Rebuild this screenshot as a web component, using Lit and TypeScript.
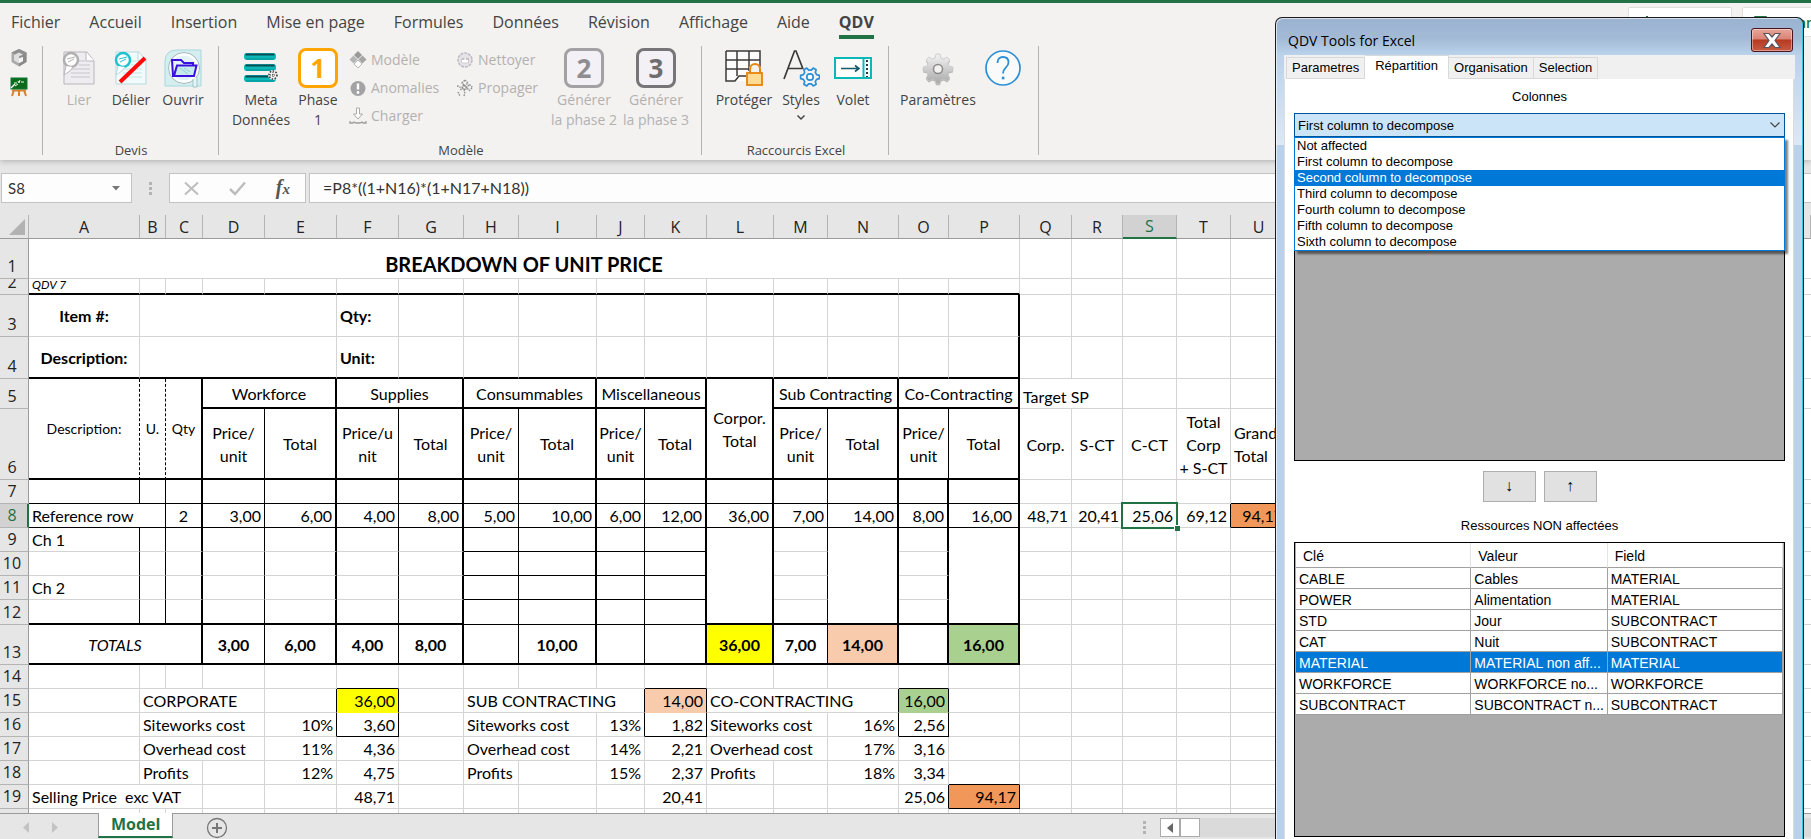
import { LitElement, html, css, svg, nothing } from "lit";
import { customElement, state } from "lit/decorators.js";
import { classMap } from "lit/directives/class-map.js";

/* ---------- icons ---------- */

const cube = html`<svg width="18" height="20" viewBox="0 0 18 20" aria-hidden="true">
  <path d="M9 1 16.5 4.6V14L9 18.4 1.5 14V4.6Z" fill="#a9a9a9" />
  <path d="M9 1 16.5 4.6 9 8.6 1.5 4.6Z" fill="#8f8f8f" />
  <path d="M9 8.6 16.5 4.6V14L9 18.4Z" fill="#8a8a8a" />
  <path d="M4 7 9 4.5 13 6.5 9 8.5V11L13 9v4l-4 2.2L4 12.5Z" fill="#dedede" />
  <path d="M9 10v5l4-2V9Z" fill="#fff" opacity=".7" />
</svg>`;

const board = html`<svg width="18" height="20" viewBox="0 0 18 20" aria-hidden="true">
  <path d="M4 13 2 19M14 13l2 6M9 13v6M2 13.5h14" stroke="#d9822b" stroke-width="2" />
  <rect x="1" y="1" width="16" height="11" fill="#0b6b1c" stroke="#173" />
  <path d="M4 6h3M8 4l1 2 1-3M11 5h3M5 9l3-2" stroke="#e9ffe9" fill="none" />
  <path d="m1 11 4-4" stroke="#fff" stroke-width="1.5" />
</svg>`;

const sheetDoc = (line: string, badge: string, paper: string) => svg`
  <path d="M2 3H25L32 12V35H2Z" fill="${paper}" stroke="${line}" />
  <path d="M24 3v9h8" fill="#fff" stroke="${line}" />
  <path d="M17 12h6M17 16h11M9 20h19M9 24h19M9 28h19" stroke="${line}" opacity=".7" />
  <circle cx="9" cy="11" r="7" fill="#fff" stroke="${badge}" stroke-width="2.5" />
  <path d="M5 10l8-2M6 13l6-3" stroke="${badge}" />
  <path d="M4 17 2 26l6-4 3-4" fill="#fff" stroke="${line}" />`;

const lier = html`<svg width="34" height="38" viewBox="0 0 34 38" aria-hidden="true">
  ${sheetDoc("#b9b5bb", "#b0b0b0", "#efecf1")}
</svg>`;
const delier = html`<svg width="34" height="38" viewBox="0 0 34 38" aria-hidden="true">
  ${sheetDoc("#b5d9dc", "#1fc3cf", "#f2fbfc")}
  <path d="M6 33 31 9" stroke="#ff0a0a" stroke-width="4" />
</svg>`;
const ouvrir = html`<svg width="40" height="40" viewBox="0 0 40 40" aria-hidden="true">
  <path d="M2 38V14Q2 2 14 2H38V38Z" fill="#d5eef0" stroke="#a5d8dd" />
  <circle cx="21" cy="20" r="15.5" fill="#e3f3f5" stroke="#a9b9bc" />
  <circle cx="21" cy="20" r="13.5" fill="none" stroke="#fff" stroke-width="2" />
  <path d="M30 31v8h4v-10" fill="#e6f5f6" stroke="#9fc5c9" />
  <path d="M9 12h9l3 3h9v4H14l-3 9H10Z" fill="none" stroke="#3a10e0" stroke-width="2" />
  <path d="M14 17.500H33.500L31 28H11Z" fill="#c7eaed" stroke="#3a10e0" stroke-width="2" />
  <path d="m17 20 8 6M21 20l6 4" stroke="#8fcfd5" />
</svg>`;
const meta = html`<svg width="36" height="34" viewBox="0 0 36 34" aria-hidden="true">
  ${[2, 13, 24].map(
    (y) => svg`<rect x="1" y="${y}" width="32" height="7" rx="3" fill="#0bb8b8" />
      <path d="M2.500 ${y + 1.5}h29" stroke="#0a4f55" stroke-width="2" />
      <path d="M3 ${y + 6}h28" stroke="#078f92" />`
  )}
  <circle cx="30" cy="24" r="5" fill="#f3f2f1" />
  <circle cx="30" cy="24" r="4" fill="none" stroke="#333" stroke-width="1.500" stroke-dasharray="1.500 1.500" />
  <path d="M27 24h6M30 21v6" stroke="#333" stroke-dasharray="1 1" />
</svg>`;

const diamonds = html`<svg width="18" height="18" viewBox="0 0 18 18" aria-hidden="true">
  <path d="M9 0 13 4 9 8 5 4Z" fill="#9a9a9a" />
  <path d="M4.500 4.500 8.500 8.500 4.500 12.500 .5 8.500Z" fill="#b5b5b5" />
  <path d="M13.500 4.500 17.500 8.500 13.500 12.500 9.500 8.500Z" fill="#a5a5a5" />
  <path d="M9 9 13 13 9 17 5 13Z" fill="#fff" stroke="#b8b8b8" />
</svg>`;
const alertIcon = html`<svg width="18" height="18" viewBox="0 0 18 18" aria-hidden="true">
  <circle cx="9" cy="9.500" r="7.500" fill="#a3a2a4" />
  <path d="M9 4.500v6" stroke="#fff" stroke-width="2.400" />
  <circle cx="9" cy="13.500" r="1.400" fill="#fff" />
</svg>`;
const download = html`<svg width="18" height="18" viewBox="0 0 18 18" aria-hidden="true">
  <path d="M7.500 1h3v6h3L9 12 4.500 7h3Z" fill="#fff" stroke="#aaa" />
  <path d="M1 14v2h3l1-1 2 1h4l2-1 1 1h3v-2" fill="none" stroke="#9d9d9d" stroke-width="1.300" />
</svg>`;
const clean = html`<svg width="18" height="18" viewBox="0 0 18 18" aria-hidden="true">
  <circle cx="9" cy="9" r="7" fill="#e6e2e8" stroke="#bdb9bf" stroke-width="1.500" stroke-dasharray="3 1" />
  <path d="M5.500 7.500V12h7V7.500" fill="#fff" stroke="#cfccd1" />
  <path d="M6 8h2.500M10 8h2.500" stroke="#8f8f8f" />
</svg>`;
const spread = html`<svg width="18" height="18" viewBox="0 0 18 18" aria-hidden="true">
  <g fill="none" stroke="#8f8f8f" stroke-width="1.400" stroke-dasharray="1.500 1">
    <path d="M9 1 12 4 9 7 6 4Z" /><path d="m13.500 5.500 3 3-3 3-3-3Z" /><path d="m8 6 3 3-2 2-3-3Z" />
    <path d="M1 7q4 0 4 5M6 9q4 2 2 8M2 13l2 4" />
  </g>
</svg>`;

const phase = (n: string, edge: string, ink: string, fill: string) => html`
  <span class="phase" style="border-color:${edge};color:${ink};background:${fill}">${n}</span>`;

const protect = html`<svg width="38" height="38" viewBox="0 0 38 38" aria-hidden="true">
  <path d="M1 2H35V32H14L10 32H1Z" fill="#fcfcfc" />
  <path d="M1 2H35V20M1 2V32H10L14 27H22M1 11H35M1 20H27M12 2V27M24 2V22" fill="none" stroke="#3b3a39" stroke-width="1.500" />
  <path d="M21 38V22h3v-4q6-6 12 0v4h2v16Z" fill="#f3f2f1" />
  <path d="M25 24v-4a5 5 0 0 1 10 0v4" fill="none" stroke="#e8830c" stroke-width="2" />
  <rect x="22" y="24" width="15" height="12" fill="#fbdc92" stroke="#e8830c" stroke-width="1.800" />
</svg>`;

const gearPath = (cx: number, cy: number, r1: number, r2: number, teeth: number) => {
  const pts: string[] = [];
  for (let i = 0; i < teeth; i++) {
    const base = (i / teeth) * Math.PI * 2;
    const step = (Math.PI * 2) / teeth;
    for (const [f, r] of [[-0.32, r1], [-0.17, r2], [0.17, r2], [0.32, r1]]) {
      const a = base + f * step;
      pts.push(`${(cx + Math.cos(a) * r).toFixed(2)} ${(cy + Math.sin(a) * r).toFixed(2)}`);
    }
  }
  return `M${pts.join("L")}Z`;
};

const stylesIcon = html`<svg width="38" height="40" viewBox="0 0 38 40" aria-hidden="true">
  <path d="M2 31 12.500 3h1.500L21 21M6 20.500h14.500" fill="none" stroke="#3b3a39" stroke-width="1.700" />
  <path d="${gearPath(28, 29, 7, 9.5, 6)}" fill="#f3f2f1" stroke="#2b8fd6" stroke-width="1.700" stroke-linejoin="round" />
  <circle cx="28" cy="29" r="3.200" fill="#fff" stroke="#2b8fd6" stroke-width="1.700" />
</svg>`;
const volet = html`<svg width="38" height="38" viewBox="0 0 38 38" aria-hidden="true">
  <rect x="1" y="9" width="36" height="20" fill="#fff" stroke="#0bb8b8" stroke-width="2" />
  <path d="M29.500 8v22" stroke="#0bb8b8" stroke-width="2" />
  <path d="M7 19.500h18M21 16.500l4 3-4 3" fill="none" stroke="#17596a" stroke-width="1.600" />
  <path d="M33 11v17" stroke="#334" stroke-width="2" stroke-dasharray="2 2" />
</svg>`;
const gear = html`<svg width="34" height="38" viewBox="0 0 34 38" aria-hidden="true">
  <defs><linearGradient id="gg" x1="0" y1="0" x2="0" y2="1">
    <stop offset="0" stop-color="#f4f4f4" /><stop offset="1" stop-color="#a8a8a8" />
  </linearGradient></defs>
  <path d="${gearPath(17, 21.5, 11.5, 15, 8)}" fill="#8b8b8b" opacity=".6" />
  <path d="${gearPath(17, 20, 11.5, 15, 8)}" fill="url(#gg)" stroke="#c6c6c6" stroke-width=".8" stroke-linejoin="round" />
  <circle cx="17" cy="20" r="4.500" fill="#f3f2f1" stroke="#8a8a8a" stroke-width="1.500" />
</svg>`;
const help = html`<svg width="38" height="38" viewBox="0 0 38 38" aria-hidden="true">
  <circle cx="19" cy="19" r="17" fill="#fafafa" stroke="#2b8fd6" stroke-width="1.700" />
  <path d="M13.500 14q0-6 5.500-6t5.500 5.500c0 5-5.500 5-5.500 11" fill="none" stroke="#2b8fd6" stroke-width="1.800" />
  <path d="M17.800 29h2.600" stroke="#2b8fd6" stroke-width="2.600" />
</svg>`;

/* ---------- ribbon ---------- */

@customElement("ribbon-bar")
class RibbonBar extends LitElement {
  static styles = css`
    :host {
      display: block;
      position: relative;
      z-index: 1;
      background: #f3f2f1;
      border-top: 3px solid #217346;
      color: #444;
      font-family: "Open Sans", "Noto Sans", sans-serif;
      box-shadow: 0 1px 6px rgba(0, 0, 0, 0.25);
    }
    button {
      font: inherit;
      color: inherit;
      background: none;
      border: 0;
      padding: 0;
      margin: 0;
    }
    .tabs {
      display: flex;
      align-items: flex-start;
      height: 43px;
      overflow: hidden;
    }
    .names {
      display: flex;
      gap: 29px;
      padding: 8px 0 0 11px;
      font-size: 16px;
      line-height: 22px;
    }
    .names button {
      padding-bottom: 2px;
      border-bottom: 4px solid transparent;
      white-space: nowrap;
    }
    .names .active {
      font-weight: 700;
      border-color: #217346;
    }
    .share {
      display: flex;
      gap: 10px;
      width: 183px;
      margin-left: auto;
      padding-top: 4px;
      overflow: hidden;
    }
    .share button {
      flex: none;
      display: flex;
      align-items: center;
      gap: 8px;
      height: 30px;
      padding: 0 11px;
      background: #fff;
      border: 1px solid #e1dfdd;
      border-radius: 2px;
      color: #217346;
      font-size: 14px;
      font-weight: 600;
    }
    .groups {
      display: flex;
      height: 114px;
    }
    .sep {
      width: 1px;
      height: 109px;
      background: #b5b3b1;
    }
    .group {
      display: flex;
      flex-direction: column;
      justify-content: space-between;
      padding: 0 9px 0 10px;
    }
    .wide {
      padding-left: 11px;
    }
    .quick {
      display: flex;
      flex-direction: column;
      gap: 9px;
      padding: 2px 15px 0 10px;
      width: 42px;
      box-sizing: border-box;
    }
    .quick svg {
      display: block;
    }
    .row {
      display: flex;
      align-items: flex-start;
    }
    .big {
      display: flex;
      flex-direction: column;
      align-items: center;
      padding-top: 2px;
      font-size: 14px;
      line-height: 20px;
      white-space: nowrap;
      width: 52px;
    }
    .big .pic {
      display: flex;
      align-items: center;
      height: 40px;
      margin-bottom: 2px;
    }
    .w60 {
      width: 62px;
    }
    .w72 {
      width: 72px;
    }
    .w78 {
      width: 78px;
    }
    .stack {
      display: flex;
      flex-direction: column;
      width: 107px;
    }
    .stack.narrow {
      width: 97px;
    }
    .stack button {
      display: flex;
      align-items: center;
      gap: 4px;
      height: 28px;
      padding-left: 5px;
      font-size: 14px;
      line-height: 20px;
    }
    .off,
    .stack button {
      color: #b3b1af;
    }
    .phase {
      box-sizing: border-box;
      display: flex;
      align-items: center;
      justify-content: center;
      width: 40px;
      height: 40px;
      border: 3px solid;
      border-radius: 8px;
      font-size: 26px;
      font-weight: 700;
      line-height: 34px;
    }
    .caption {
      text-align: center;
      font-size: 13px;
      line-height: 19px;
    }
    .chev {
      height: 14px;
    }
  `;

  private big(label: string[], pic: unknown, cls = "") {
    return html`<button type="button" class="big ${cls}">
      <span class="pic">${pic}</span>${label.map((l) => html`<span>${l}</span>`)}
    </button>`;
  }

  private small(label: string, pic: unknown) {
    return html`<button type="button">${pic}<span>${label}</span></button>`;
  }

  render() {
    const tabs = ["Fichier", "Accueil", "Insertion", "Mise en page", "Formules", "Données", "Révision", "Affichage", "Aide", "QDV"];
    return html`
      <div class="tabs">
        <nav class="names">
          ${tabs.map((t) => html`<button type="button" class=${classMap({ active: t === "QDV" })}>${t}</button>`)}
        </nav>
        <div class="share">
          <button type="button">
            <svg width="14" height="14" viewBox="0 0 14 14" aria-hidden="true"><path d="M7 1 11 5H8v5H6V5H3ZM1 8v5h12V8" fill="none" stroke="#217346" /></svg>
            Partager
          </button>
          <button type="button">
            <svg width="13" height="13" viewBox="0 0 13 13" aria-hidden="true"><path d="M.5.500h12v9H6L3 12.500v-3H.5Z" fill="none" stroke="#217346" /></svg>
            Commentaires
          </button>
        </div>
      </div>
      <div class="groups">
        <div class="quick">${cube}${board}</div>
        <span class="sep"></span>
        <div class="group">
          <div class="row">
            ${this.big(["Lier"], lier, "off")} ${this.big(["Délier"], delier)} ${this.big(["Ouvrir"], ouvrir)}
          </div>
          <div class="caption">Devis</div>
        </div>
        <span class="sep"></span>
        <div class="group wide">
          <div class="row">
            ${this.big(["Meta", "Données"], meta, "w60")} ${this.big(["Phase", "1"], phase("1", "#ffa500", "#ffa500", "#fff"))}
            <div class="stack">
              ${this.small("Modèle", diamonds)} ${this.small("Anomalies", alertIcon)} ${this.small("Charger", download)}
            </div>
            <div class="stack narrow">${this.small("Nettoyer", clean)} ${this.small("Propager", spread)}</div>
            ${this.big(["Générer", "la phase 2"], phase("2", "#a3a1a4", "#8f8d90", "#f3f0f6"), "w72 off")}
            ${this.big(["Générer", "la phase 3"], phase("3", "#777578", "#6f6d70", "#f3f0f6"), "w72 off")}
          </div>
          <div class="caption">Modèle</div>
        </div>
        <span class="sep"></span>
        <div class="group wide">
          <div class="row">
            ${this.big(["Protéger"], protect, "w60")}
            <button type="button" class="big">
              <span class="pic">${stylesIcon}</span><span>Styles</span>
              <svg class="chev" width="10" height="14" viewBox="0 0 10 14" aria-hidden="true"><path d="m1.500 5.500 3.500 3.500 3.500-3.500" fill="none" stroke="#444" stroke-width="1.500" /></svg>
            </button>
            ${this.big(["Volet"], volet)}
          </div>
          <div class="caption">Raccourcis Excel</div>
        </div>
        <span class="sep"></span>
        <div class="group">
          <div class="row">
            ${this.big(["Paramètres"], gear, "w78")}
            <button type="button" class="big" aria-label="Aide"><span class="pic">${help}</span></button>
          </div>
        </div>
        <span class="sep"></span>
      </div>
    `;
  }
}

/* ---------- formula bar ---------- */

@customElement("formula-bar")
class FormulaBar extends LitElement {
  static styles = css`
    :host {
      display: flex;
      align-items: center;
      padding: 13px 0 12px 1px;
      background: #e6e6e6;
    }
    .box {
      box-sizing: border-box;
      display: flex;
      align-items: center;
      height: 30px;
      background: #fdfdfd;
      border: 1px solid #c3c3c3;
    }
    input {
      flex: 1;
      min-width: 0;
      border: 0;
      outline: 0;
      background: none;
      padding: 0;
      color: #333;
      font: 15px/20px Lato, sans-serif;
    }
    .name {
      width: 131px;
      padding: 0 11px 0 6px;
    }
    .dots {
      width: 37px;
      display: flex;
      justify-content: center;
    }
    .tools {
      width: 137px;
      justify-content: space-between;
      margin-right: 3px;
      padding: 0 15px 0 13px;
    }
    .tools button {
      border: 0;
      background: none;
      padding: 0;
      display: flex;
    }
    .formula {
      flex: 1;
      border-right: 0;
      padding-left: 13px;
    }
    .formula input {
      font-size: 16px;
    }
    .tools .fx {
      align-items: baseline;
      color: #555;
      font: italic 20px/24px "Liberation Serif", serif;
    }
    .fx small {
      font-size: 15px;
    }
  `;
  render() {
    return html`
      <div class="box name">
        <input aria-label="Zone Nom" .value=${"S8"} />
        <svg width="8" height="5" viewBox="0 0 8 5" aria-hidden="true"><path d="M0 0h8L4 4.500Z" fill="#777" /></svg>
      </div>
      <span class="dots">
        <svg width="3" height="13" viewBox="0 0 3 13" aria-hidden="true"><path d="M0 0h3v3H0zM0 5h3v3H0zM0 10h3v3H0z" fill="#b3b3b3" /></svg>
      </span>
      <div class="box tools">
        <button type="button" aria-label="Annuler">
          <svg width="17" height="15" viewBox="0 0 17 15"><path d="M2 1.500 15 13.500M15 1.500 2 13.500" stroke="#bdbdbd" stroke-width="2" /></svg>
        </button>
        <button type="button" aria-label="Entrer">
          <svg width="17" height="15" viewBox="0 0 17 15"><path d="m1 8 5 5L16 1.500" fill="none" stroke="#bdbdbd" stroke-width="2.500" /></svg>
        </button>
        <button type="button" class="fx"><b>f</b><small><b>x</b></small></button>
      </div>
      <div class="box formula"><input aria-label="Formule" .value=${"=P8*((1+N16)*(1+N17+N18))"} /></div>
    `;
  }
}

/* ---------- sheet ---------- */

type Cell = { t?: string | string[]; s?: number; rs?: number; c?: string };
type Row = { h: number; r?: string; b?: string; cells?: Record<string, Cell> };

const LETTERS = "ABCDEFGHIJKLMNOPQRSTU";
const WIDTHS = [111, 26, 37, 62, 72, 62, 65, 55, 78, 48, 62, 67, 54, 71, 50, 71, 52, 51, 54, 54, 56];

// One character per column: g grid line, 0 none, 1 thin, 2 thick, d dashed.
const BODY = "1121212121221222";
const HEAD = "dd21212121221212";
const FRAME = "ggggggggggggggg2";
const THIN = "1111111111111111";
const THICK = "2222222222222222";
const BOXED = "gggg11ggg11gg11";

const PU: Cell = { t: ["Price/", "unit"], c: "mid" };
const TOT: Cell = { t: "Total", c: "mid" };
const n = (t: string, c = ""): Cell => ({ t, c: `num ${c}` });
const m = (t: string, c = ""): Cell => ({ t, c: `mid strong ${c}` });

const ROWS: Row[] = [
  { h: 40, cells: { A: { t: "BREAKDOWN OF UNIT PRICE", s: 16, c: "title" } } },
  { h: 16, b: THICK, cells: { A: { t: "QDV 7", c: "tiny" } } },
  { h: 42, r: FRAME, cells: { A: m("Item #:"), B: { s: 4 }, F: { t: "Qty:", c: "lead strong" } } },
  { h: 42, r: FRAME, b: THICK, cells: { A: m("Description:"), B: { s: 4 }, F: { t: "Unit:", c: "lead strong" } } },
  {
    h: 30, r: HEAD, b: THICK,
    cells: {
      A: { t: "Description:", rs: 2, c: "mid minor" }, B: { t: "U.", rs: 2, c: "mid minor" }, C: { t: "Qty", rs: 2, c: "mid minor" },
      D: { t: "Workforce", s: 2, c: "mid" }, F: { t: "Supplies", s: 2, c: "mid" }, H: { t: "Consummables", s: 2, c: "mid" },
      J: { t: "Miscellaneous", s: 2, c: "mid" }, L: { t: ["Corpor.", "Total"], rs: 2, c: "mid" },
      M: { t: "Sub Contracting", s: 2, c: "mid" }, O: { t: "Co-Contracting", s: 2, c: "mid" }, Q: { t: "Target SP", s: 2 },
    },
  },
  {
    h: 71, r: HEAD, b: THICK,
    cells: {
      D: PU, E: TOT, F: { t: ["Price/u", "nit"], c: "mid" }, G: TOT, H: PU, I: TOT, J: PU, K: TOT, M: PU, N: TOT, O: PU, P: TOT,
      Q: { t: "Corp.", c: "mid" }, R: { t: "S-CT", c: "mid" }, S: { t: "C-CT", c: "mid" },
      T: { t: ["Total", "Corp", "+ S-CT"], c: "mid" }, U: { t: ["Grand", "Total"], c: "lead" },
    },
  },
  { h: 24, r: BODY, b: THIN + "gggg1" },
  {
    h: 24, r: BODY + "ggg1", b: THIN + "gggg1",
    cells: {
      A: { t: "Reference row", s: 2 }, C: { t: "2", c: "mid" }, D: n("3,00"), E: n("6,00"), F: n("4,00"), G: n("8,00"), H: n("5,00"),
      I: n("10,00"), J: n("6,00"), K: n("12,00"), L: n("36,00"), M: n("7,00"), N: n("14,00"), O: n("8,00"), P: n("16,00", "inset"),
      Q: n("48,71"), R: n("20,41"), S: n("25,06", "active"), T: n("69,12"), U: n("94,17", "orange clip"),
    },
  },
  { h: 24, r: BODY, b: "ggggggg1111", cells: { A: { t: "Ch 1" }, L: { rs: 4 }, N: { rs: 4 }, P: { rs: 4 } } },
  { h: 24, r: BODY, b: "ggggggg1111" },
  { h: 24, r: BODY, b: "ggggggg1111", cells: { A: { t: "Ch 2" } } },
  { h: 25, r: BODY, b: "2222222111122222" },
  {
    h: 40, r: BODY, b: THICK,
    cells: {
      A: { t: "TOTALS", s: 3, c: "mid slant" }, D: m("3,00"), E: m("6,00"), F: m("4,00"), G: m("8,00"), I: m("10,00"),
      L: m("36,00", "yellow"), M: m("7,00"), N: m("14,00", "peach"), P: m("16,00", "green"),
    },
  },
  { h: 24, b: "ggggg1gggg1ggg1" },
  {
    h: 24, r: BOXED, b: "ggggg0gggg0ggg0",
    cells: {
      B: { t: "CORPORATE", s: 3 }, F: n("36,00", "yellow"), H: { t: "SUB CONTRACTING", s: 3 }, K: n("14,00", "peach"),
      L: { t: "CO-CONTRACTING", s: 3 }, O: n("16,00", "green"),
    },
  },
  {
    h: 24, r: BOXED, b: "ggggg1gggg1ggg1",
    cells: {
      B: { t: "Siteworks cost", s: 3 }, E: n("10%"), F: n("3,60"), H: { t: "Siteworks cost", s: 2 }, J: n("13%"), K: n("1,82"),
      L: { t: "Siteworks cost", s: 2 }, N: n("16%"), O: n("2,56"),
    },
  },
  {
    h: 24,
    cells: {
      B: { t: "Overhead cost", s: 3 }, E: n("11%"), F: n("4,36"), H: { t: "Overhead cost", s: 2 }, J: n("14%"), K: n("2,21"),
      L: { t: "Overhead cost", s: 2 }, N: n("17%"), O: n("3,16"),
    },
  },
  {
    h: 24, b: "ggggggggggggggg1",
    cells: {
      B: { t: "Profits", s: 2 }, E: n("12%"), F: n("4,75"), H: { t: "Profits" }, J: n("15%"), K: n("2,37"),
      L: { t: "Profits" }, N: n("18%"), O: n("3,34"),
    },
  },
  {
    h: 24, r: "gggggggggggggg11", b: "ggggggggggggggg1",
    cells: { A: { t: "Selling Price  exc VAT", s: 3 }, F: n("48,71"), K: n("20,41"), O: n("25,06"), P: n("94,17", "orange") },
  },
];

@customElement("sheet-grid")
class SheetGrid extends LitElement {
  static styles = css`
    :host {
      display: block;
      overflow: hidden;
      background: #fff;
      color: #000;
      font: 16px/23px Lato, sans-serif;
    }
    table {
      width: 100%;
      table-layout: fixed;
      border-collapse: separate;
      border-spacing: 0;
    }
    .gutter {
      width: 29px;
    }
    th {
      box-sizing: border-box;
      padding: 0;
      font: 16px/23px "Open Sans", "Noto Sans", sans-serif;
      background: #e6e6e6;
      color: #222;
    }
    thead th {
      height: 24px;
      line-height: 22px;
      border-right: 1px solid #b4b4b4;
      border-bottom: 1px solid #9b9b9b;
    }
    thead svg {
      display: block;
      margin-left: 9px;
    }
    tbody th {
      vertical-align: bottom;
      padding-right: 4px;
      border-right: 1px solid #9b9b9b;
      border-bottom: 1px solid #b4b4b4;
    }
    .short span {
      display: flex;
      align-items: flex-end;
      justify-content: center;
      height: 15px;
      overflow: hidden;
    }
    thead .on,
    tbody .on {
      background: #d2d2d2;
      color: #217346;
    }
    thead .on {
      border-bottom: 2px solid #217346;
    }
    tbody .on {
      border-right: 2px solid #217346;
      padding-right: 3px;
    }
    td {
      box-sizing: border-box;
      padding: 0 3px;
      border: 0 solid #d4d4d4;
      vertical-align: bottom;
      white-space: pre;
    }
    .rg { border-right-width: 1px; }
    .r0 { border-right: 1px solid transparent; }
    .r1 { border-right: 1px solid #000; }
    .r2 { border-right: 2px solid #000; }
    .rd { border-right: 1px dashed #000; }
    .bg { border-bottom-width: 1px; }
    .b0 { border-bottom: 1px solid transparent; }
    .b1 { border-bottom: 1px solid #000; }
    .b2 { border-bottom: 2px solid #000; }
    .num { text-align: right; }
    .inset { padding-right: 6px; }
    .mid {
      text-align: center;
      vertical-align: middle;
      padding: 0;
    }
    .lead { vertical-align: middle; }
    .strong { font-weight: 700; }
    .slant { font-style: italic; }
    .minor { font-size: 14px; }
    .tiny {
      padding-bottom: 2px;
      font: italic 12px/12px Lato, sans-serif;
    }
    .title {
      padding-bottom: 2px;
      text-align: center;
      font-size: 20px;
      font-weight: 700;
      line-height: 24px;
    }
    .clip { overflow: hidden; }
    .yellow { background: #ff0; }
    .peach { background: #f8cbad; }
    .green { background: #a9d08e; }
    .orange { background: #f19759; }
    .active { position: relative; }
    .active::before {
      content: "";
      position: absolute;
      inset: -2px;
      border: 2px solid #217346;
    }
    .active::after {
      content: "";
      position: absolute;
      right: -4px;
      bottom: -4px;
      width: 5px;
      height: 5px;
      background: #217346;
      border: solid #fff;
      border-width: 1px 0 0 1px;
    }
    .rest td {
      height: 24px;
    }
  `;

  private row(row: Row, i: number, covered: Set<string>) {
    const cells: unknown[] = [];
    for (let c = 0; c < LETTERS.length; ) {
      if (covered.has(`${i}:${c}`)) {
        c++;
        continue;
      }
      const cell = row.cells?.[LETTERS[c]] ?? {};
      const span = cell.s ?? 1;
      const rows = cell.rs ?? 1;
      for (let k = 1; k < rows; k++) covered.add(`${i + k}:${c}`);
      const right = row.r?.[c + span - 1] ?? "g";
      const bottom = ROWS[i + rows - 1].b?.[c] ?? "g";
      const text = Array.isArray(cell.t) ? cell.t.map((l, k) => html`${k ? html`<br />` : nothing}${l}`) : cell.t ?? nothing;
      cells.push(html`<td colspan=${span} rowspan=${rows} class="r${right} b${bottom} ${cell.c ?? ""}">${text}</td>`);
      c += span;
    }
    return html`<tr style="height:${row.h}px">
      <th scope="row" class=${classMap({ on: i === 7, short: row.h < 20 })}><span>${i + 1}</span></th>
      ${cells}
      <td class="bg"></td>
    </tr>`;
  }

  render() {
    const covered = new Set<string>();
    return html`<table>
      <colgroup>
        <col class="gutter" />
        ${WIDTHS.map((w) => html`<col style="width:${w}px" />`)}
        <col />
      </colgroup>
      <thead>
        <tr>
          <th><svg width="16" height="16" viewBox="0 0 16 16" aria-hidden="true"><path d="M16 0V16H0Z" fill="#b2b2b2" /></svg></th>
          ${[...LETTERS].map((l) => html`<th scope="col" class=${classMap({ on: l === "S" })}>${l}</th>`)}
          <th></th>
        </tr>
      </thead>
      <tbody>
        ${ROWS.map((r, i) => this.row(r, i, covered))}
        <tr class="rest">
          <th></th>
          ${[...LETTERS].map(() => html`<td class="rg bg"></td>`)}
          <td class="bg"></td>
        </tr>
      </tbody>
    </table>`;
  }
}

/* ---------- sheet tabs ---------- */

@customElement("sheet-tabs")
class SheetTabs extends LitElement {
  static styles = css`
    :host {
      box-sizing: border-box;
      display: flex;
      align-items: flex-start;
      height: 26px;
      background: #e6e6e6;
      border-top: 1px solid #9b9b9b;
    }
    button {
      border: 0;
      padding: 0;
      background: none;
      display: flex;
    }
    .nav {
      display: flex;
      gap: 23px;
      width: 98px;
      box-sizing: border-box;
      padding: 8px 0 0 23px;
    }
    .sheet {
      box-sizing: border-box;
      height: 25px;
      padding: 0 12px;
      margin-top: -1px;
      background: #fff;
      border: solid #9b9b9b;
      border-width: 0 1px;
      border-bottom: 2px solid #217346;
      color: #217346;
      font: 700 16px/22px "Open Sans", "Noto Sans", sans-serif;
    }
    .add {
      margin: 3px 0 0 33px;
    }
    .scroll {
      display: flex;
      align-items: center;
      width: 668px;
      margin: 4px 0 0 auto;
    }
    .dots {
      margin-right: 14px;
    }
    .arrow,
    .thumb {
      box-sizing: border-box;
      height: 19px;
      width: 20px;
      background: #fff;
      border: 1px solid #ababab;
      align-items: center;
      justify-content: center;
    }
    .track {
      flex: 1;
      height: 19px;
      background: #dadada;
    }
  `;
  render() {
    return html`
      <div class="nav">
        <button type="button" aria-label="Précédent"><svg width="6" height="11" viewBox="0 0 6 11"><path d="M6 0V11L0 5.500Z" fill="#c3c3c3" /></svg></button>
        <button type="button" aria-label="Suivant"><svg width="6" height="11" viewBox="0 0 6 11"><path d="M0 0V11L6 5.500Z" fill="#c3c3c3" /></svg></button>
      </div>
      <button type="button" class="sheet">Model</button>
      <button type="button" class="add" aria-label="Nouvelle feuille">
        <svg width="22" height="22" viewBox="0 0 22 22"><circle cx="11" cy="11" r="9.500" fill="none" stroke="#777" stroke-width="1.300" /><path d="M6 11h10M11 6v10" stroke="#777" stroke-width="2" /></svg>
      </button>
      <div class="scroll">
        <svg class="dots" width="3" height="13" viewBox="0 0 3 13" aria-hidden="true"><path d="M0 0h3v3H0zM0 5h3v3H0zM0 10h3v3H0z" fill="#b3b3b3" /></svg>
        <button type="button" class="arrow" aria-label="Défiler à gauche"><svg width="6" height="10" viewBox="0 0 6 10"><path d="M6 0V10L0 5Z" fill="#666" /></svg></button>
        <span class="thumb"></span><span class="track"></span>
      </div>
    `;
  }
}

/* ---------- tools dialog ---------- */

@customElement("tools-dialog")
class ToolsDialog extends LitElement {
  @state() private hover = "Second column to decompose";

  static styles = css`
    :host {
      box-sizing: border-box;
      display: flex;
      flex-direction: column;
      padding: 0 8px;
      border: 1px solid #1b1b1b;
      border-bottom: 0;
      border-radius: 7px 7px 0 0;
      background: linear-gradient(#9ab3d1 0, #a3bad6 20px, #bbd2eb 37px, #dde8f5 127px, #b9d1ea 127px);
      box-shadow: inset -1px 0 #35c5ea, inset 1px 1px rgba(255, 255, 255, 0.6);
      color: #000;
      font: 13px/16px "Liberation Sans", Arial, sans-serif;
    }
    button {
      font: inherit;
      color: inherit;
      padding: 0;
    }
    .bar {
      display: flex;
      align-items: flex-start;
      justify-content: space-between;
      height: 37px;
      padding: 10px 2px 0 4px;
      box-sizing: border-box;
    }
    .bar h1 {
      margin: 0;
      padding-top: 3px;
      font: 14px/20px "Open Sans", "Noto Sans", sans-serif;
    }
    .close {
      width: 42px;
      height: 24px;
      display: flex;
      align-items: center;
      justify-content: center;
      border: 1px solid #4a1420;
      border-radius: 3px;
      background: linear-gradient(#e8a598 0, #d98476 45%, #b73a22 50%, #c65a42 100%);
      box-shadow: inset 0 0 0 1px rgba(255, 255, 255, 0.4);
    }
    .tabs {
      display: flex;
      align-items: flex-end;
      height: 24px;
      padding-left: 2px;
      background: #f0f0f0;
    }
    .tabs button {
      box-sizing: border-box;
      height: 22px;
      border: 1px solid #d9d9d9;
      border-left-width: 0;
      background: #f0f0f0;
      padding: 0 5px;
    }
    .tabs .active {
      height: 24px;
      padding: 0 10px 2px;
      background: #fff;
      border-bottom-color: #fff;
    }
    .tabs button:first-child {
      border-left-width: 1px;
    }
    .page {
      flex: 1;
      min-height: 0;
      display: flex;
      flex-direction: column;
      margin-right: 1px;
      padding: 10px 8px 2px 9px;
      background: #fff;
      border: solid #dcdcdc;
      border-width: 0 1px;
      text-align: center;
    }
    .combo {
      position: relative;
      margin: 8px 0;
      text-align: left;
    }
    select {
      box-sizing: border-box;
      display: block;
      width: 100%;
      height: 24px;
      padding: 1px 3px 0;
      appearance: none;
      outline: 0;
      border: 1px solid #005499;
      border-radius: 0;
      background: #cce4f7;
      color: #000;
      font: inherit;
    }
    .combo > svg {
      position: absolute;
      right: 5px;
      top: 9px;
      pointer-events: none;
    }
    .list {
      position: absolute;
      top: 100%;
      left: 0;
      right: 0;
      margin: 0;
      padding: 0;
      list-style: none;
      background: #fff;
      border: 1px solid #0078d7;
      box-shadow: 3px 3px 2px rgba(0, 0, 0, 0.5);
    }
    .list li {
      padding: 0 2px;
    }
    .list .hot {
      background: #0078d7;
      color: #fff;
    }
    .pane {
      min-height: 0;
      box-sizing: border-box;
      background: #ababab;
      border: 1px solid #000;
      overflow: hidden;
    }
    .upper {
      flex: 15 1 0;
    }
    .lower {
      flex: 14 1 0;
      padding: 0 1px;
      text-align: left;
    }
    .moves {
      display: flex;
      justify-content: center;
      gap: 8px;
      margin: 10px 0 16px;
    }
    .moves button {
      width: 53px;
      height: 31px;
      border: 1px solid #adadad;
      background: #e1e1e1;
      font-size: 16px;
    }
    .caption {
      margin-bottom: 8px;
    }
    table {
      width: 100%;
      table-layout: fixed;
      border-collapse: separate;
      border-spacing: 0;
      font-size: 14px;
    }
    th,
    td {
      box-sizing: border-box;
      height: 21px;
      padding: 2px 3px 0;
      text-align: left;
      font-weight: 400;
      background: #fff;
      border: solid #a0a0a0;
      border-width: 0 1px 1px 0;
      white-space: nowrap;
      overflow: hidden;
    }
    th {
      height: 25px;
      padding: 2px 7px 0;
      border-right-color: #e3e3e3;
    }
    .key,
    .field {
      width: 36%;
    }
    .picked td {
      background: #0078d7;
      color: #fff;
    }
  `;

  render() {
    const options = [
      "Not affected", "First column to decompose", "Second column to decompose", "Third column to decompose",
      "Fourth column to decompose", "Fifth column to decompose", "Sixth column to decompose",
    ];
    const rows = [
      ["CABLE", "Cables", "MATERIAL"],
      ["POWER", "Alimentation", "MATERIAL"],
      ["STD", "Jour", "SUBCONTRACT"],
      ["CAT", "Nuit", "SUBCONTRACT"],
      ["MATERIAL", "MATERIAL non aff...", "MATERIAL"],
      ["WORKFORCE", "WORKFORCE no...", "WORKFORCE"],
      ["SUBCONTRACT", "SUBCONTRACT n...", "SUBCONTRACT"],
    ];
    return html`
      <div class="bar">
        <h1>QDV Tools for Excel</h1>
        <button type="button" class="close" aria-label="Fermer">
          <svg width="20" height="17" viewBox="0 0 20 17">
            <path d="M2 1.500h5L10 5l3-3.500h5L13 8.500l5 7h-5L10 12l-3 3.500H2l5-7Z" fill="#fff" stroke="#5b5560" stroke-width="1.200" />
          </svg>
        </button>
      </div>
      <div class="tabs">
        ${["Parametres", "Répartition", "Organisation", "Selection"].map(
          (t) => html`<button type="button" class=${classMap({ active: t === "Répartition" })}>${t}</button>`
        )}
      </div>
      <div class="page">
        <label for="columns">Colonnes</label>
        <div class="combo">
          <select id="columns">
            ${options.map((o) => html`<option ?selected=${o === options[1]}>${o}</option>`)}
          </select>
          <svg width="10" height="6" viewBox="0 0 10 6" aria-hidden="true"><path d="m.5.500 4.500 4.500L9.500.5" fill="none" stroke="#444" stroke-width="1.200" /></svg>
          <ul class="list" role="listbox" aria-label="Colonnes">
            ${options.map(
              (o) => html`<li role="option" class=${classMap({ hot: o === this.hover })} @mouseenter=${() => (this.hover = o)}>${o}</li>`
            )}
          </ul>
        </div>
        <div class="pane upper"></div>
        <div class="moves">
          <button type="button">↓</button>
          <button type="button">↑</button>
        </div>
        <div class="caption">Ressources NON affectées</div>
        <div class="pane lower">
          <table>
            <thead>
              <tr><th class="key">Clé</th><th>Valeur</th><th class="field">Field</th></tr>
            </thead>
            <tbody>
              ${rows.map((r, i) => html`<tr class=${classMap({ picked: i === 4 })}>${r.map((v) => html`<td>${v}</td>`)}</tr>`)}
            </tbody>
          </table>
        </div>
      </div>
    `;
  }
}

@customElement("app-root")
class AppRoot extends LitElement {
  static styles = css`
    :host {
      position: relative;
      display: flex;
      flex-direction: column;
      height: 100vh;
      overflow: hidden;
      background: #e6e6e6;
    }
    sheet-grid {
      flex: 1;
      min-height: 0;
    }
    tools-dialog {
      position: absolute;
      z-index: 2;
      top: 17px;
      right: 7px;
      bottom: 0;
      width: 529px;
    }
  `;
  render() {
    return html`
      <ribbon-bar></ribbon-bar>
      <formula-bar></formula-bar>
      <sheet-grid></sheet-grid>
      <sheet-tabs></sheet-tabs>
      <tools-dialog></tools-dialog>
    `;
  }
}
